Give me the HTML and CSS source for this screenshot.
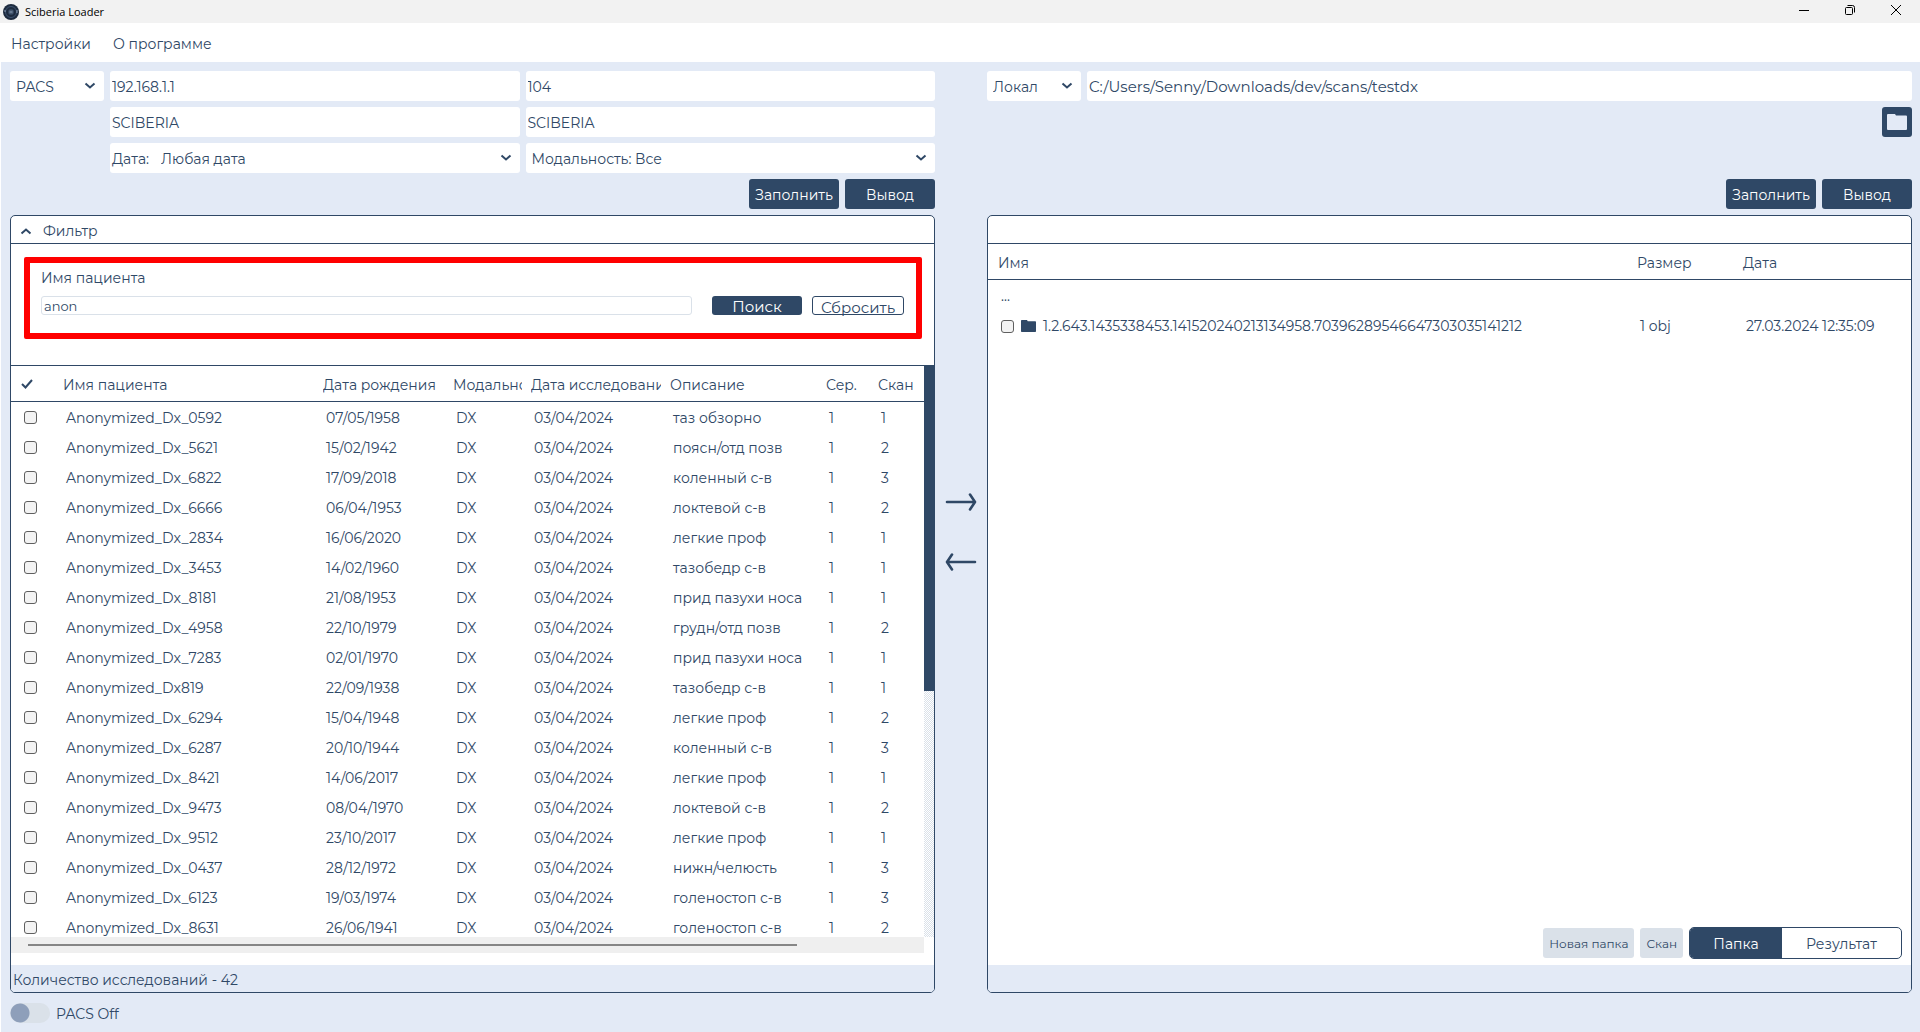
FILE: index.html
```html
<!DOCTYPE html>
<html lang="ru">
<head>
<meta charset="utf-8">
<title>Sciberia Loader</title>
<link rel="stylesheet" href="styles.css">
</head>
<body>
<svg class="defs" aria-hidden="true">
  <symbol id="chevron" viewBox="0 0 12 8"><path d="M1.5 1.5 6 5.5l4.500-4" fill="none" stroke="currentColor" stroke-width="2"/></symbol>
  <symbol id="folder" viewBox="0 0 20 16"><path d="M1 0h7l1 1.500h10a1 1 0 0 1 1 1V15a1 1 0 0 1-1 1H1a1 1 0 0 1-1-1V1a1 1 0 0 1 1-1z" fill="currentColor"/></symbol>
  <symbol id="arrow" viewBox="0 0 32 18"><path d="M2 9h27M25 1.500 30 9 25 16.500" fill="none" stroke="currentColor" stroke-width="2.600" stroke-linecap="round" stroke-linejoin="round"/></symbol>
</svg>

<header class="titlebar">
  <svg class="logo" viewBox="0 0 16 16"><circle cx="8" cy="8" r="8" fill="#1d2b3f"/><circle cx="8" cy="8" r="5.500" fill="none" stroke="#3d5270"/><circle cx="8" cy="8" r="3" fill="#33465f"/><path d="M7 6.500v3M9 6.500v3M7 8h2" stroke="#8ea0b8" stroke-width=".7"/><path d="M2 6v2M14 6v3" stroke="#8ea0b8"/></svg>
  <span class="title">Sciberia Loader</span>
  <div class="window-buttons">
    <button type="button" aria-label="Свернуть"><svg viewBox="0 0 12 12"><path d="M1 6.500h10" stroke="#000"/></svg></button>
    <button type="button" aria-label="Восстановить"><svg viewBox="0 0 12 12"><rect x="1.500" y="3.500" width="7" height="7" rx="1" fill="none" stroke="#000"/><path d="M3.500 1.500h5a2 2 0 0 1 2 2v5" fill="none" stroke="#000"/></svg></button>
    <button type="button" aria-label="Закрыть"><svg viewBox="0 0 12 12"><path d="m1 1 10 10M11 1 1 11" stroke="#000"/></svg></button>
  </div>
</header>

<nav class="menu">
  <a href="#settings">Настройки</a>
  <a href="#about">О программе</a>
</nav>

<main class="workspace">
  <section class="side">
    <form class="source pacs">
      <div class="field choice"><select aria-label="Источник"><option>PACS</option></select><svg class="chevron"><use href="#chevron"/></svg></div>
      <input class="field" aria-label="IP-адрес" value="192.168.1.1">
      <input class="field" aria-label="Порт" value="104">
      <input class="field row-start" aria-label="AE Title" value="SCIBERIA">
      <input class="field" aria-label="Called AE Title" value="SCIBERIA">
      <div class="field date row-start"><label for="date">Дата:</label><div class="choice"><select id="date"><option>Любая дата</option></select><svg class="chevron"><use href="#chevron"/></svg></div></div>
      <div class="field choice"><select aria-label="Модальность"><option>Модальность: Все</option></select><svg class="chevron"><use href="#chevron"/></svg></div>
      <div class="actions"><button type="button" class="btn">Заполнить</button><button type="button" class="btn">Вывод</button></div>
    </form>

    <div class="panel">
      <button type="button" class="panel-head" aria-expanded="true"><svg class="chevron up"><use href="#chevron"/></svg>Фильтр</button>
      <div class="filter">
        <form class="search">
          <label for="patient">Имя пациента</label>
          <div class="search-row">
            <input id="patient" value="anon">
            <button type="button" class="btn">Поиск</button>
            <button type="button" class="btn outline">Сбросить</button>
          </div>
        </form>
      </div>
      <div class="scroll-area">
        <div class="viewport">
          <table class="studies">
            <colgroup><col class="c-check"><col><col class="c-birth"><col class="c-mod"><col class="c-date"><col class="c-desc"><col class="c-ser"><col class="c-scan"></colgroup>
            <thead><tr>
              <th><svg class="tick" viewBox="0 0 12 10"><path d="m1 5 3.500 3.500L11 1" fill="none" stroke="currentColor" stroke-width="2"/></svg></th>
              <th><span>Имя пациента</span></th><th><span>Дата рождения</span></th><th><span>Модальность</span></th><th><span>Дата исследования</span></th><th><span>Описание</span></th><th><span>Сер.</span></th><th><span>Скан</span></th>
            </tr></thead>
            <tbody id="rows"></tbody>
          </table>
        </div>
        <div class="vbar"><div class="vthumb"></div></div>
        <div class="hbar"><div class="hthumb"></div></div>
      </div>
      <div class="status">Количество исследований - 42</div>
    </div>
    <label class="switch"><input type="checkbox"><span>PACS Off</span></label>
  </section>

  <div class="transfer">
    <button type="button" aria-label="Копировать вправо"><svg><use href="#arrow"/></svg></button>
    <button type="button" aria-label="Копировать влево"><svg class="back"><use href="#arrow"/></svg></button>
  </div>

  <section class="side">
    <form class="source local">
      <div class="field choice"><select aria-label="Источник"><option>Локал</option></select><svg class="chevron"><use href="#chevron"/></svg></div>
      <input class="field path" aria-label="Путь" value="C:/Users/Senny/Downloads/dev/scans/testdx">
      <div class="actions"><button type="button" class="btn browse" aria-label="Выбрать папку"><svg><use href="#folder"/></svg></button></div>
      <div class="actions last"><button type="button" class="btn">Заполнить</button><button type="button" class="btn">Вывод</button></div>
    </form>

    <div class="panel">
      <div class="panel-head"></div>
      <div class="files-area">
        <table class="files">
          <colgroup><col><col class="c-size"><col class="c-time"></colgroup>
          <thead><tr><th>Имя</th><th>Размер</th><th>Дата</th></tr></thead>
          <tbody>
            <tr><td colspan="3">...</td></tr>
            <tr>
              <td><label class="file"><input type="checkbox" class="check"><svg><use href="#folder"/></svg>1.2.643.1435338453.141520240213134958.70396289546647303035141212</label></td>
              <td>1 obj</td><td>27.03.2024 12:35:09</td>
            </tr>
          </tbody>
        </table>
      </div>
      <div class="tools">
        <button type="button" class="soft">Новая папка</button>
        <button type="button" class="soft">Скан</button>
        <div class="tabs"><button type="button" class="active">Папка</button><button type="button">Результат</button></div>
      </div>
      <div class="status"></div>
    </div>
    <div class="spacer"></div>
  </section>
</main>
<script src="rows.js"></script>
</body>
</html>
```
FILE: styles.css
```css
:root {
  --ink: #2f4866;
  --bg: #e3eaf6;
  --soft: #dae1e9;
}

* { box-sizing: border-box; }

body {
  margin: 0;
  height: 100vh;
  display: flex;
  flex-direction: column;
  background: #fff;
  color: var(--ink);
  font: 14px/20px Montserrat, Inter, "Noto Sans", sans-serif;
}

button, input, select {
  font: inherit;
  color: inherit;
}

button {
  border: 0;
  padding: 0;
  background: none;
  cursor: pointer;
}

.defs {
  position: absolute;
  width: 0;
  height: 0;
}

/* Window frame */
.titlebar {
  flex: none;
  height: 23px;
  display: flex;
  align-items: center;
  gap: 6px;
  padding-left: 3px;
  background: #f2f2f2;
  color: #000;
}

.logo { width: 16px; height: 16px; }

.title { font: 11px/20px "Open Sans", "Noto Sans", sans-serif; }

.window-buttons {
  margin-left: auto;
  padding-right: 1px;
  align-self: flex-start;
  display: flex;
}

.window-buttons button {
  width: 46px;
  height: 20px;
  display: grid;
  place-items: center;
}

.window-buttons svg { width: 12px; height: 12px; }

.menu {
  flex: none;
  height: 39px;
  display: flex;
  align-items: center;
  gap: 22px;
  padding: 2px 11px 0;
}

.menu a {
  color: inherit;
  text-decoration: none;
}

.workspace {
  flex: 1;
  min-height: 0;
  display: grid;
  grid-template-columns: minmax(0, 1fr) 52px minmax(0, 1fr);
  margin-left: 1px;
  padding: 9px 8px 9px 9px;
  background: var(--bg);
}

.side {
  min-height: 0;
  display: flex;
  flex-direction: column;
}

/* Source settings */
.source {
  flex: none;
  display: grid;
  grid-auto-rows: 30px;
  gap: 6px;
  margin-bottom: 6px;
}

.pacs { grid-template-columns: 94px 1fr 1fr; }
.local { grid-template-columns: 94px 1fr; }
.row-start { grid-column: 2; }

.field {
  min-width: 0;
  border: 0;
  border-radius: 3px;
  padding: 0 2px;
  background: #fff;
}

input.field { padding-top: 2px; }
.path { font-size: 15px; }

.choice {
  display: grid;
  align-items: center;
}

.choice > * { grid-area: 1 / 1; }

.choice select {
  width: 100%;
  height: 30px;
  border: 0;
  padding: 2px 4px 0;
  background: none;
  appearance: none;
}

.chevron {
  width: 12px;
  height: 8px;
}

.choice .chevron {
  justify-self: end;
  margin-right: 6px;
  pointer-events: none;
}

.date {
  display: flex;
  align-items: center;
  gap: 8px;
}

.date label { padding-top: 2px; }
.date .choice { flex: 1; }

.actions {
  grid-column: 1 / -1;
  display: flex;
  justify-content: flex-end;
  gap: 6px;
}

.actions.last { grid-row: 4; }

.btn {
  width: 90px;
  padding-top: 2px;
  border-radius: 3px;
  background: var(--ink);
  color: #fff;
}

.browse {
  width: 30px;
  padding: 0;
  display: grid;
  place-items: center;
  color: var(--bg);
}

.browse svg { width: 20px; height: 16px; }

/* Panels */
.panel {
  flex: 1;
  min-height: 0;
  display: flex;
  flex-direction: column;
  overflow: hidden;
  border: 1px solid var(--ink);
  border-radius: 5px;
  background: #fff;
}

.panel-head {
  flex: none;
  height: 28px;
  display: flex;
  align-items: center;
  gap: 11px;
  padding: 2px 9px 0;
  border-bottom: 1px solid var(--ink);
  text-align: left;
}

.up { transform: rotate(180deg); }

.filter {
  padding: 13px 12px 26px 13px;
  border-bottom: 1px solid var(--ink);
}

.search {
  height: 82px;
  padding: 5px 12px 0 11px;
  border: 6px solid #f00;
  border-radius: 2px;
}

.search label {
  display: block;
  margin-bottom: 8px;
}

.search-row {
  display: flex;
  height: 19px;
  gap: 10px;
}

.search-row input {
  flex: 1;
  min-width: 0;
  margin-right: 10px;
  border: 1px solid var(--soft);
  border-radius: 3px;
  padding: 1px 2px 0;
  font-size: 13px;
}

.search-row .btn {
  font-size: 15px;
  line-height: 17px;
}

.search-row .outline {
  width: 92px;
  border: 1px solid var(--ink);
  background: #fff;
  color: var(--ink);
}

.scroll-area {
  flex: 1;
  min-height: 0;
  display: grid;
  grid-template: minmax(0, 1fr) 16px / minmax(0, 1fr) 10px;
  padding-bottom: 12px;
}

.viewport { overflow: hidden; }

table {
  width: 100%;
  table-layout: fixed;
  border-collapse: separate;
  border-spacing: 0;
}

th {
  height: 36px;
  padding: 2px 5px 0 4px;
  border-bottom: 1px solid var(--ink);
  font-weight: 400;
  text-align: left;
  white-space: nowrap;
}

th span {
  display: block;
  overflow: hidden;
}

td {
  height: 30px;
  padding: 2px 0 0 7px;
  white-space: nowrap;
}

.c-check { width: 48px; }
.c-birth { width: 130px; }
.c-mod { width: 78px; }
.c-date { width: 139px; }
.c-desc { width: 156px; }
.c-ser { width: 52px; }
.c-scan { width: 50px; }
.c-size { width: 106px; }
.c-time { width: 178px; }

.studies th:first-child { padding: 0 0 0 10px; }
.studies td:first-child { padding: 0 0 0 13px; }

.tick {
  display: block;
  width: 12px;
  height: 10px;
}

.check {
  display: block;
  flex: none;
  width: 13px;
  height: 13px;
  margin: 0;
  border: 1px solid #5f5f5f;
  border-radius: 3px;
  background: #f3f3f3;
  appearance: none;
}

.vbar { background: repeating-conic-gradient(var(--soft) 0 25%, #fff 0 50%) 0 0 / 2px 2px; }

.vthumb {
  height: 57%;
  background: var(--ink);
}

.hbar {
  padding: 7px 127px 7px 17px;
  background: #efefef;
}

.hthumb {
  height: 2px;
  background: #868686;
}

.status {
  flex: none;
  height: 27px;
  padding: 5px 2px;
  background: var(--bg);
}

.files-area { flex: 1; }
.files th { padding-left: 10px; }
.files td { padding-left: 13px; }

.file {
  display: flex;
  align-items: center;
  gap: 7px;
}

.file svg {
  flex: none;
  width: 15px;
  height: 12px;
}

.tools {
  display: flex;
  justify-content: flex-end;
  align-items: center;
  gap: 6px;
  padding: 0 9px 6px;
}

.soft {
  height: 30px;
  padding: 2px 6px 0;
  border-radius: 3px;
  background: var(--soft);
  font-size: 12px;
}

.tabs {
  width: 213px;
  height: 32px;
  display: grid;
  grid-template-columns: 92px 1fr;
  overflow: hidden;
  border: 1px solid var(--ink);
  border-radius: 5px;
}

.tabs button { padding-top: 2px; }

.active {
  background: var(--ink);
  color: #fff;
}

/* PACS switch */
.switch {
  display: flex;
  align-items: center;
  align-self: flex-start;
  gap: 6px;
  height: 20px;
  margin-top: 10px;
}

.switch span { padding-top: 2px; }

.switch input {
  width: 40px;
  height: 20px;
  margin: 0;
  border-radius: 10px;
  background: radial-gradient(circle at 10px 10px, #8e9fba 9px, transparent 10px) var(--soft);
  appearance: none;
}

.spacer { height: 30px; }

.transfer {
  display: flex;
  flex-direction: column;
  align-items: center;
  justify-content: center;
  gap: 42px;
  padding-bottom: 30px;
}

.transfer button { height: 18px; }

.transfer svg {
  display: block;
  width: 32px;
  height: 18px;
}

.back { transform: rotate(180deg); }
```
FILE: rows.js
```
const studies = [
  ["Anonymized_Dx_0592", "07/05/1958", "таз обзорно", 1],
  ["Anonymized_Dx_5621", "15/02/1942", "поясн/отд позв", 2],
  ["Anonymized_Dx_6822", "17/09/2018", "коленный с-в", 3],
  ["Anonymized_Dx_6666", "06/04/1953", "локтевой с-в", 2],
  ["Anonymized_Dx_2834", "16/06/2020", "легкие проф", 1],
  ["Anonymized_Dx_3453", "14/02/1960", "тазобедр с-в", 1],
  ["Anonymized_Dx_8181", "21/08/1953", "прид пазухи носа", 1],
  ["Anonymized_Dx_4958", "22/10/1979", "грудн/отд позв", 2],
  ["Anonymized_Dx_7283", "02/01/1970", "прид пазухи носа", 1],
  ["Anonymized_Dx819", "22/09/1938", "тазобедр с-в", 1],
  ["Anonymized_Dx_6294", "15/04/1948", "легкие проф", 2],
  ["Anonymized_Dx_6287", "20/10/1944", "коленный с-в", 3],
  ["Anonymized_Dx_8421", "14/06/2017", "легкие проф", 1],
  ["Anonymized_Dx_9473", "08/04/1970", "локтевой с-в", 2],
  ["Anonymized_Dx_9512", "23/10/2017", "легкие проф", 1],
  ["Anonymized_Dx_0437", "28/12/1972", "нижн/челюсть", 3],
  ["Anonymized_Dx_6123", "19/03/1974", "голеностоп с-в", 3],
  ["Anonymized_Dx_8631", "26/06/1941", "голеностоп с-в", 2]
];

document.getElementById("rows").innerHTML = studies.map(([name, birth, text, scans]) =>
  `<tr><td><input type="checkbox" class="check" aria-label="${name}"></td><td>${name}</td><td>${birth}</td><td>DX</td><td>03/04/2024</td><td>${text}</td><td>1</td><td>${scans}</td></tr>`
).join("");
```
